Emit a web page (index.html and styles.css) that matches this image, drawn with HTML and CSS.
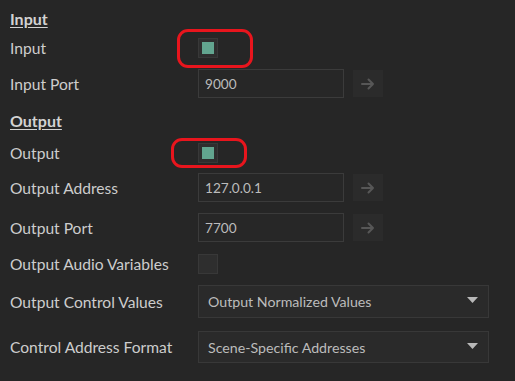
FILE: index.html
```
<!DOCTYPE html>
<html>
<head>
<meta charset="utf-8">
<link rel="stylesheet" href="styles.css">
</head>
<body>
<div class="panel">
  <div class="section-title t-input">Input</div>
  <div class="row r-input">
    <div class="label">Input</div>
    <div class="check-wrap">
      <div class="checkbox checked"><div class="tick"></div></div>
      <div class="mark mark-a"></div>
    </div>
  </div>
  <div class="row field-row r-inport">
    <div class="label">Input Port</div>
    <div class="field">9000</div>
    <div class="go"><svg width="16" height="16" viewBox="0 0 16 16"><path d="M2 8H13M8.5 3.5L13 8L8.5 12.5" fill="none" stroke="#575757" stroke-width="2" stroke-linecap="round" stroke-linejoin="round"/></svg></div>
  </div>
  <div class="section-title t-output">Output</div>
  <div class="row r-output">
    <div class="label">Output</div>
    <div class="check-wrap">
      <div class="checkbox checked"><div class="tick"></div></div>
      <div class="mark mark-b"></div>
    </div>
  </div>
  <div class="row field-row r-addr">
    <div class="label">Output Address</div>
    <div class="field">127.0.0.1</div>
    <div class="go"><svg width="16" height="16" viewBox="0 0 16 16"><path d="M2 8H13M8.5 3.5L13 8L8.5 12.5" fill="none" stroke="#575757" stroke-width="2" stroke-linecap="round" stroke-linejoin="round"/></svg></div>
  </div>
  <div class="row field-row r-outport">
    <div class="label">Output Port</div>
    <div class="field">7700</div>
    <div class="go"><svg width="16" height="16" viewBox="0 0 16 16"><path d="M2 8H13M8.5 3.5L13 8L8.5 12.5" fill="none" stroke="#575757" stroke-width="2" stroke-linecap="round" stroke-linejoin="round"/></svg></div>
  </div>
  <div class="row r-audio">
    <div class="label">Output Audio Variables</div>
    <div class="check-wrap">
      <div class="checkbox"></div>
    </div>
  </div>
  <div class="row select-row r-values">
    <div class="label">Output Control Values</div>
    <div class="select"><span>Output Normalized Values</span><svg width="11" height="6" viewBox="0 0 11 6"><path d="M0 0H11L5.5 6Z" fill="#b8b8b8"/></svg></div>
  </div>
  <div class="row select-row r-format">
    <div class="label">Control Address Format</div>
    <div class="select"><span>Scene-Specific Addresses</span><svg width="11" height="6" viewBox="0 0 11 6"><path d="M0 0H11L5.5 6Z" fill="#b8b8b8"/></svg></div>
  </div>
</div>
</body>
</html>
```
FILE: styles.css
```
html, body {
  margin: 0;
  padding: 0;
  background: #262626;
}
body {
  width: 515px;
  height: 381px;
  overflow: hidden;
  font-family: Lato, "Open Sans", sans-serif;
  color: #cdcdcd;
}
.panel {
  padding: 0 0 0 10px;
  display: flex;
  flex-direction: column;
}
.section-title {
  height: 20px;
  line-height: 20px;
  font-size: 16px;
  font-weight: 700;
  text-decoration: underline;
  text-underline-offset: 2px;
  color: #d2d2d2;
}
.t-input { margin-top: 9px; }
.t-output { margin-top: 13px; }
.row {
  display: flex;
  align-items: center;
}
.label {
  width: 188px;
  flex: none;
  font-size: 15.6px;
  line-height: 20px;
  color: #cdcdcd;
}
.r-input { margin-top: 9px; height: 20px; }
.r-inport { margin-top: 11px; height: 29px; }
.r-output { margin-top: 12px; height: 20px; }
.r-addr { margin-top: 10px; height: 29px; }
.r-outport { margin-top: 11px; height: 29px; }
.r-audio { margin-top: 12px; height: 20px; }
.r-values { margin-top: 11px; height: 33px; }
.r-format { margin-top: 13px; height: 32px; }

.check-wrap {
  position: relative;
  width: 20px;
  height: 20px;
}
.checkbox {
  box-sizing: border-box;
  width: 20px;
  height: 20px;
  border: 1px solid #383838;
  background: #2e2e2e;
  padding: 3px;
}
.checkbox .tick {
  width: 12px;
  height: 12px;
  background: #62a58f;
}
.mark {
  position: absolute;
  box-sizing: border-box;
  border: 3px solid #e8151d;
  border-radius: 11px;
  width: 76px;
}
.mark-a { left: -21px; top: -9px; height: 39px; }
.mark-b { left: -27px; top: -5px; height: 30px; }

.field {
  box-sizing: border-box;
  width: 146px;
  height: 100%;
  border: 1px solid #3b3b3b;
  background: #272727;
  padding-left: 6px;
  font-size: 13.6px;
  display: flex;
  align-items: center;
  color: #bcbcbc;
}
.go {
  margin-left: 9px;
  width: 30px;
  height: 27px;
  background: #2b2b2b;
  display: flex;
  align-items: center;
  justify-content: center;
}
.select {
  box-sizing: border-box;
  width: 291px;
  height: 100%;
  border: 1px solid #383838;
  background: #2a2a2a;
  padding: 0 10px 0 9px;
  display: flex;
  align-items: center;
  justify-content: space-between;
  font-size: 14.2px;
  color: #bcbcbc;
}
.select svg { margin-top: -3px; }
```
